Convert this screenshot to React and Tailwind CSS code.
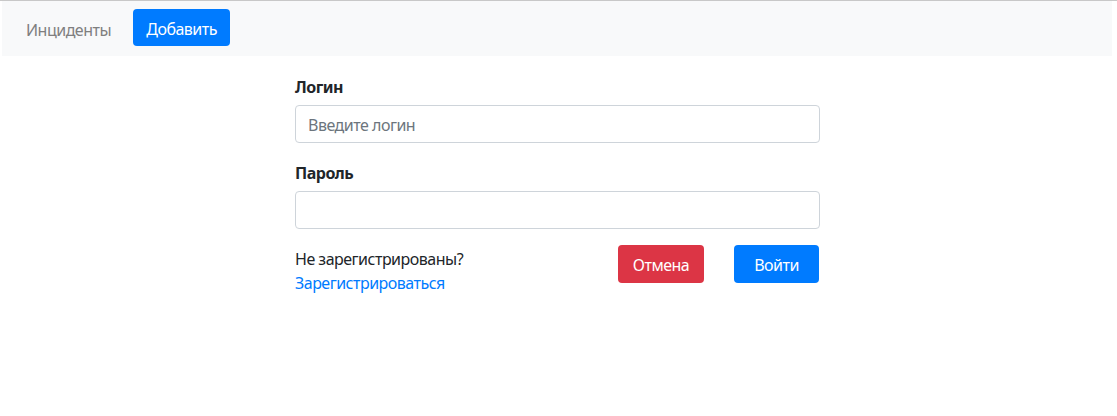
import React from 'react'

export default function App() {
  return (
    <div className="min-h-[416px] bg-white text-[#212529] text-[16px] tracking-[-0.5px]" style={{ fontFamily: '"Noto Sans", "Open Sans", sans-serif' }}>
      <div className="h-px bg-[#c8c8c8]" />
      {/* Navbar */}
      <nav className="ml-[2px] w-[1110px] h-[55px] bg-[#f8f9fa] flex items-start pt-2 pl-4">
        <a className="px-2 h-[38px] pt-[2px] leading-[38px] text-[#7f7f7f]">Инциденты</a>
        <button className="ml-[14px] w-[97px] h-[37px] pt-[2px] rounded bg-[#007bff] text-white leading-6">Добавить</button>
      </nav>

      {/* Login form */}
      <form className="w-[525px] ml-[295px] pt-[17px]">
        <div className="mb-4">
          <label className="block font-bold h-6 leading-[28px] mb-2">Логин</label>
          <input
            type="text"
            placeholder="Введите логин"
            className="block w-full h-[38px] px-3 pt-[2px] border border-[#ced4da] rounded text-[#495057] placeholder:text-[#6c757d] outline-none"
          />
        </div>
        <div className="mb-4">
          <label className="block font-bold h-6 leading-[28px] mb-2">Пароль</label>
          <input
            type="password"
            className="block w-full h-[38px] px-3 border border-[#ced4da] rounded outline-none"
          />
        </div>
        <div className="flex justify-between items-start">
          <div className="leading-6 pt-[2px]">
            <div>Не зарегистрированы?</div>
            <a className="text-[#007bff]">Зарегистрироваться</a>
          </div>
          <div className="flex gap-[30px] pr-px">
            <button type="button" className="w-[86px] h-[38px] pt-[2px] rounded bg-[#dc3545] text-white">Отмена</button>
            <button type="button" className="w-[85px] h-[38px] pt-[2px] rounded bg-[#007bff] text-white">Войти</button>
          </div>
        </div>
      </form>
    </div>
  )
}
